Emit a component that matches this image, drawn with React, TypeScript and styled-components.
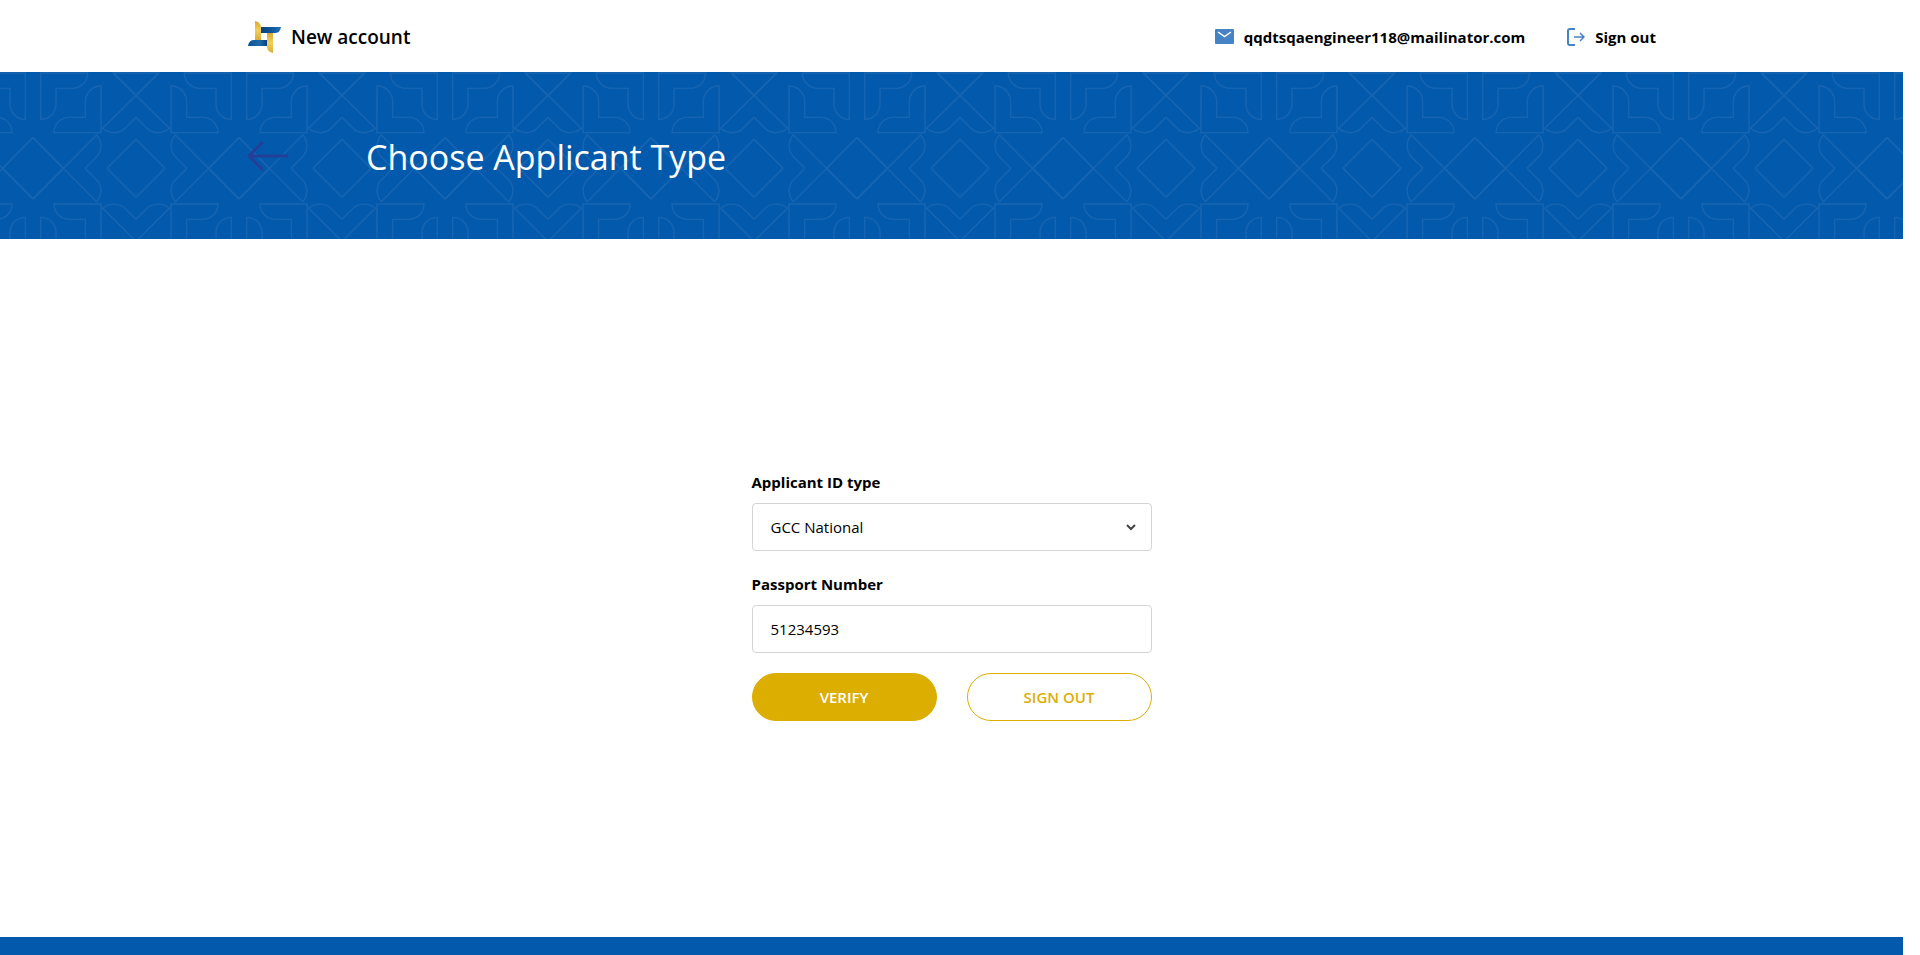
import React from "react";
import styled, { createGlobalStyle, css } from "styled-components";

const blue = "#0359ab";
const gold = "#dcae02";
const sans = '"Segoe UI", "Open Sans", "Noto Sans", sans-serif';

const GlobalStyle = createGlobalStyle`
  *, *::before, *::after { box-sizing: border-box; }
  body {
    margin: 0;
    background: #fff;
    color: #000;
    font-family: ${sans};
    font-size: 15px;
    line-height: 26px;
  }
`;

const Page = styled.div`
  display: flex;
  flex-direction: column;
  min-height: 100vh;
  margin-right: 17px;
`;

const Container = styled.div`
  width: 100%;
  max-width: 1409px;
  margin: 0 auto;
  display: flex;
  align-items: center;
`;

const Header = styled.header`
  display: flex;
  height: 72px;
  padding-top: 2px;
  flex-shrink: 0;
`;

const Brand = styled.a`
  display: flex;
  align-items: center;
  gap: 10px;
  color: inherit;
  text-decoration: none;
  font-size: 19px;
  font-weight: 600;
`;

const Account = styled.div`
  display: flex;
  align-items: center;
  gap: 40px;
  margin-left: auto;
`;

const AccountLink = styled.a`
  display: flex;
  align-items: center;
  gap: 10px;
  color: inherit;
  text-decoration: none;
  font-weight: 700;
`;

const Banner = styled.section`
  position: relative;
  display: flex;
  height: 167px;
  flex-shrink: 0;
  background: ${blue};
`;

const BannerPattern = styled.svg`
  position: absolute;
  inset: 0;
  width: 100%;
  height: 100%;
`;

const BannerContent = styled(Container)`
  position: relative;
  gap: 76px;
`;

const BackButton = styled.button`
  display: flex;
  padding: 0;
  border: 0;
  background: none;
  cursor: pointer;
`;

const Title = styled.h1`
  margin: 0;
  padding-top: 2px;
  color: #fff;
  font-size: 34px;
  font-weight: 400;
  line-height: 48px;
`;

const Main = styled.main`
  flex: 1;
  display: flex;
  align-items: center;
  justify-content: center;
  padding-top: 14px;
`;

const Form = styled.form`
  display: flex;
  flex-direction: column;
  gap: 20px;
  width: 400px;
`;

const Field = styled.div`
  display: flex;
  flex-direction: column;
  gap: 8px;
`;

const Label = styled.label`
  font-weight: 700;
`;

const SelectBox = styled.div`
  position: relative;
`;

const control = css`
  display: block;
  width: 100%;
  height: 48px;
  padding: 0 18px;
  border: 1px solid #d4d4d4;
  border-radius: 4px;
  background: #fff;
  color: #000;
  font-family: inherit;
  font-size: 15px;
`;

const Select = styled.select`
  ${control}
  appearance: none;
`;

const Input = styled.input`
  ${control}
`;

const Chevron = styled.svg`
  position: absolute;
  right: 16px;
  top: 19px;
  pointer-events: none;
`;

const Actions = styled.div`
  display: flex;
  gap: 30px;
`;

const Button = styled.button<{ $outlined?: boolean }>`
  flex: 1;
  height: 48px;
  border: 1px solid ${gold};
  border-radius: 24px;
  background: ${(p) => (p.$outlined ? "#fff" : gold)};
  color: ${(p) => (p.$outlined ? gold : "#fff")};
  font-family: inherit;
  font-size: 15px;
  font-weight: 600;
  cursor: pointer;
`;

const Footer = styled.footer`
  height: 18px;
  flex-shrink: 0;
  background: ${blue};
`;

const Logo = () => (
  <svg width="34" height="34" viewBox="0 0 34 34" aria-hidden="true">
    <defs>
      <linearGradient id="goldFill" x1="0" y1="0" x2="0" y2="1">
        <stop offset="0" stopColor="#d6a92f" />
        <stop offset="0.5" stopColor="#f2cf5b" />
        <stop offset="1" stopColor="#d9ac35" />
      </linearGradient>
      <linearGradient id="blueTop" x1="0" y1="0" x2="1" y2="0">
        <stop offset="0" stopColor="#0b3f7c" />
        <stop offset="0.5" stopColor="#0d559b" />
        <stop offset="1" stopColor="#2173b4" />
      </linearGradient>
      <linearGradient id="blueBottom" x1="0" y1="0" x2="1" y2="0">
        <stop offset="0" stopColor="#0d4f94" />
        <stop offset="0.6" stopColor="#1c6cab" />
        <stop offset="1" stopColor="#0b3f7c" />
      </linearGradient>
    </defs>
    <path d="M8 1c4 1 6 3 6 7v12H8z" fill="url(#goldFill)" />
    <path d="M26 33c-4-1-6-3-6-7V13h6z" fill="url(#goldFill)" />
    <path d="M14 7h20c-1 5-3 6-7 6H14z" fill="url(#blueTop)" />
    <path d="M20 26H1c1-5 3-6 7-6h12z" fill="url(#blueBottom)" />
  </svg>
);

const Quadrant = () => (
  <>
    <path d="M-105-247V-107H-246C-246-134-225-153-200-153H-152V-200C-152-227-131-247-105-247Z" />
    <path d="M-286-286H-145C-145-260-167-240-193-240H-240V-193C-240-167-260-147-286-147Z" />
    <path d="M0-87L-87 0" />
    <path d="M68-286L-100-120C-80-102-48-104-32-121L0-153M0-286H-68L0-218" />
    <path d="M-309 92L-118-100C-100-80-102-48-121-32L-153 0M-309-92L-218 0" />
  </>
);

const Pattern = () => (
  <BannerPattern aria-hidden="true">
    <defs>
      <pattern id="ornament" x="33" width="206" height="167" patternUnits="userSpaceOnUse" viewBox="-309 -289 618 501">
        <g fill="none" stroke="#1765b2" strokeWidth="4">
          <Quadrant />
          <g transform="scale(-1 1)"><Quadrant /></g>
          <g transform="scale(1 -1)"><Quadrant /></g>
          <g transform="scale(-1 -1)"><Quadrant /></g>
        </g>
      </pattern>
    </defs>
    <rect width="100%" height="100%" fill="url(#ornament)" />
  </BannerPattern>
);

export default function App() {
  return (
    <>
      <GlobalStyle />
      <Page>
        <Header>
          <Container>
            <Brand href="#">
              <Logo />
              New account
            </Brand>
            <Account>
              <AccountLink href="#">
                <svg width="19" height="16" viewBox="0 0 19 16" aria-hidden="true">
                  <rect width="19" height="15" rx="1" fill="#4583c5" />
                  <path d="M3 3l6.500 4.500L16 3" fill="none" stroke="#fff" strokeWidth="1.500" />
                </svg>
                qqdtsqaengineer118@mailinator.com
              </AccountLink>
              <AccountLink href="#">
                <svg width="20" height="20" viewBox="0 0 20 20" fill="none" stroke="#4583c5" aria-hidden="true">
                  <path d="M10 2H5a2 2 0 0 0-2 2v12a2 2 0 0 0 2 2h5" strokeWidth="2" />
                  <path d="M9 10h10M15 6l4 4-4 4" strokeWidth="1.500" />
                </svg>
                Sign out
              </AccountLink>
            </Account>
          </Container>
        </Header>
        <Banner>
          <Pattern />
          <BannerContent>
            <BackButton type="button" aria-label="Back">
              <svg width="43" height="30" viewBox="0 0 43 30" fill="none" stroke="#233f98" strokeWidth="3" strokeLinecap="round" strokeLinejoin="round">
                <path d="M40 15H3M15 2L2 15l13 13" />
              </svg>
            </BackButton>
            <Title>Choose Applicant Type</Title>
          </BannerContent>
        </Banner>
        <Main>
          <Form onSubmit={(e) => e.preventDefault()}>
            <Field>
              <Label htmlFor="idType">Applicant ID type</Label>
              <SelectBox>
                <Select id="idType" defaultValue="gcc">
                  <option value="gcc">GCC National</option>
                </Select>
                <Chevron width="10" height="10" viewBox="0 0 10 10" fill="none" stroke="#444" strokeWidth="2" aria-hidden="true">
                  <path d="M1 3l4 4 4-4" />
                </Chevron>
              </SelectBox>
            </Field>
            <Field>
              <Label htmlFor="passport">Passport Number</Label>
              <Input id="passport" defaultValue="51234593" />
            </Field>
            <Actions>
              <Button type="submit">VERIFY</Button>
              <Button type="button" $outlined>SIGN OUT</Button>
            </Actions>
          </Form>
        </Main>
        <Footer />
      </Page>
    </>
  );
}
